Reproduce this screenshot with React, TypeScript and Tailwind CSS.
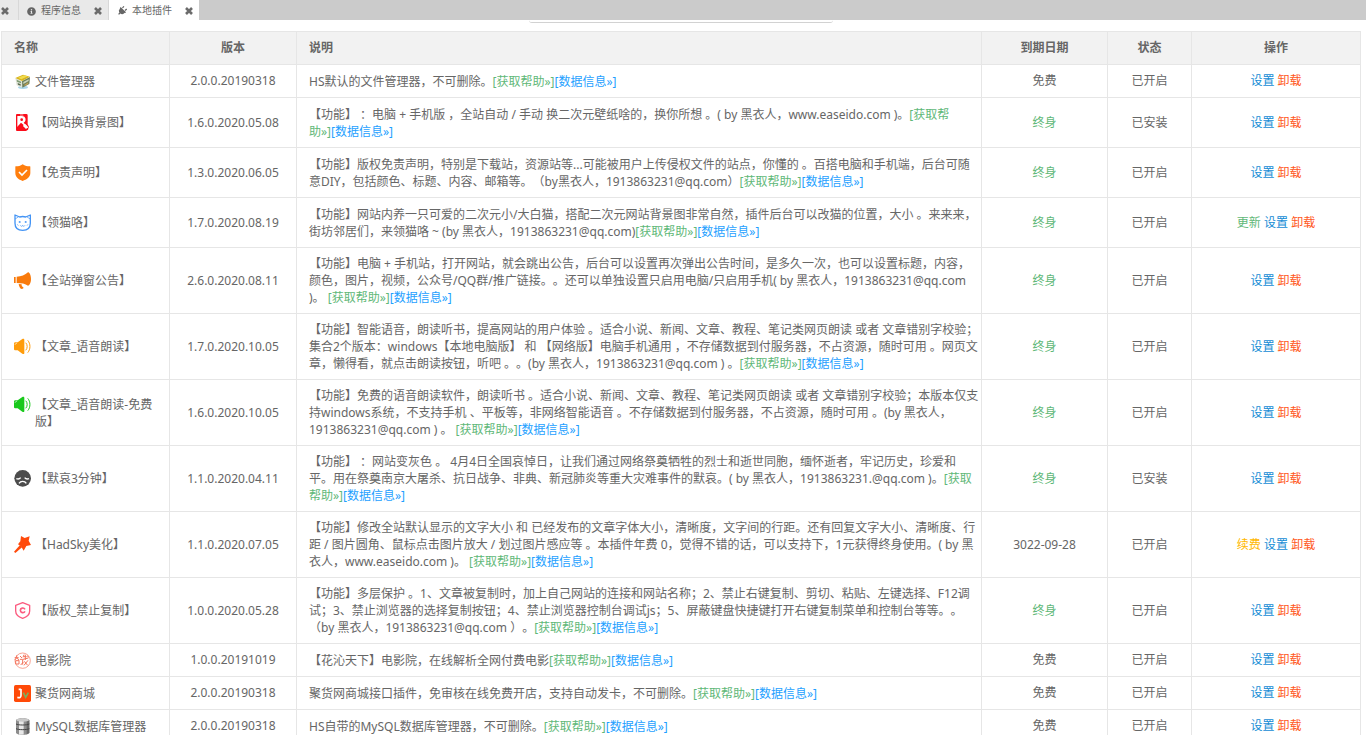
import type { ReactNode } from 'react';
import { FaInfoCircle, FaPlug } from 'react-icons/fa';

interface Plugin {
  icon: ReactNode;
  name: string;
  version: string;
  desc: string;
  help?: string;
  expire: string;
  status: string;
  extra?: 'update' | 'renew';
}

const ICON = 'w-[17px] h-[17px] shrink-0';

const BoxIcon = () => (
  <svg viewBox="0 0 51 51" className={ICON}>
    <ellipse cx="27" cy="43" rx="15" ry="5" fill="#a9d4ea" />
    <path d="M4 15 24 24 25 44 8 37Z" fill="#dfe3d6" />
    <path d="M24 24 48 12 46 33 25 44Z" fill="#6d7f5a" />
    <path d="M4 15 27 5 48 11 24 24Z" fill="#d8b31c" />
    <path d="M12 14 30 7 41 10 22 19Z" fill="#f1dc4e" />
    <path d="M8 20 21 26v5L9 26Z" fill="#7d9a72" />
    <path d="M11 30 20 34v4l-8-3Z" fill="#55684d" />
    <path d="M28 27 44 19v5L28 33Z" fill="#c9d2bd" />
    <path d="M31 35 43 28v4l-11 7Z" fill="#c4a254" />
  </svg>
);

const PhoneImageIcon = () => (
  <svg viewBox="0 0 51 51" className={ICON}>
    <path d="M9 0h28a4 4 0 0 1 4 4v27l4 8-3 8-6 4H9a3 3 0 0 1-3-3V3a3 3 0 0 1 3-3Z" fill="#fb0d1b" />
    <path d="M10 6h13c14 0 15 16 6 20l13 14-6 5-15-15-11 10Z" fill="#fff" />
    <circle cx="23" cy="17" r="4" fill="#fb0d1b" />
    <path d="m10 38 11-12 8 7-9 11H10Z" fill="#fb0d1b" />
    <path d="m34 31 9 12" stroke="#fff" strokeWidth="3" />
    <path d="M18 3h10" stroke="#fff" strokeWidth="2" />
  </svg>
);

const ShieldCheckIcon = () => (
  <svg viewBox="0 0 51 51" className={ICON}>
    <path d="M26 1c7 5 14 6 21 6 2 0 2 1 2 3v17c0 13-11 19-23 24C14 46 4 40 4 27V10c0-2 0-3 2-3 7 0 13-1 20-6Z" fill="#ff7e0d" />
    <path d="m15 24 9 9 15-15" fill="none" stroke="#fff" strokeWidth="5" />
  </svg>
);

const CatIcon = () => (
  <svg viewBox="0 0 51 51" className={ICON} fill="none" stroke="#4394f5" strokeWidth="4">
    <path d="M3 3 17 9c6-2 12-2 18 0L49 3v25c0 14-10 21-23 21S3 42 3 28Z" strokeLinejoin="round" />
    <path d="M3 15 13 9M49 15 39 9" strokeWidth="2" />
    <circle cx="17" cy="24" r="1" />
    <circle cx="35" cy="24" r="1" />
    <path d="M19 34c2 4 6 4 7 0 1 4 5 4 7 0M10 31l3 4M42 31l-3 4" strokeWidth="2" />
  </svg>
);

const HornIcon = () => (
  <svg viewBox="0 0 51 51" className={ICON} fill="#f97a0b">
    <path d="M0 15h5v18H0ZM8 14c14 0 25-5 34-13 4 0 9 8 9 20s-5 20-9 20c-8-6-20-8-34-8Z" />
    <path d="m14 36 9 1c-1 5 2 7 5 9 1 3-1 5-5 5-5-1-8-8-9-15Z" />
  </svg>
);

const SpeakerIcon = ({ color }: { color: string }) => (
  <svg viewBox="0 0 51 51" className={ICON} fill={color}>
    <path d="M0 17c0-3 2-4 5-4h6L25 3c3-2 6-1 6 3v39c0 4-3 4-6 2L11 37H5c-3 0-5-1-5-4Z" />
    <path d="M3 20c1-3 3-4 6-4" fill="none" stroke="#fff" strokeWidth="2" />
    <path d="M36 15c5 5 5 16 0 21M42 8c8 9 8 26 0 35" fill="none" stroke={color} strokeWidth="3" strokeLinecap="round" />
  </svg>
);

const SadFaceIcon = () => (
  <svg viewBox="0 0 51 51" className={ICON}>
    <circle cx="26" cy="25" r="25" fill="#4c4c4c" />
    <path d="M7 26c5 2 10 1 13-3M45 26c-5 2-10 1-13-3" fill="none" stroke="#fff" strokeWidth="4" />
    <path d="M15 40c5-8 17-8 22 0" fill="none" stroke="#fff" strokeWidth="4" />
  </svg>
);

const WandIcon = () => (
  <svg viewBox="0 0 51 51" className={ICON} fill="#ff4a0b">
    <path d="m21 0 11 6 15-5-3 13 7 13-14 3-8 14-8-13-9-6 7-9Z" />
    <path d="m18 27 7 6L4 51l-4-4Z" />
  </svg>
);

const CopyrightShieldIcon = () => (
  <svg viewBox="0 0 51 51" className={ICON} fill="none" stroke="#fb5c80" strokeWidth="4">
    <path d="M26 2 47 10v17c0 11-9 18-21 22C14 45 5 38 5 27V10Z" strokeLinejoin="round" />
    <path d="M33 22c-4-7-14-4-14 3s10 10 14 3" strokeWidth="5" />
  </svg>
);

const CinemaIcon = () => (
  <svg viewBox="0 0 51 51" className={ICON} fill="none" stroke="#f4745c">
    <circle cx="26" cy="26" r="23" strokeWidth="2" />
    <path d="M2 17h12M8 10v7M2 24l6-6 8 6M5 26h10v10H5ZM18 12l6 6M18 22h8v16M30 8l-3 8M29 14h9M34 8v16M27 22l16-4M31 28l10 12M42 25 30 40M39 11l6 5M20 39l8-9" strokeWidth="3" />
  </svg>
);

const MallIcon = () => (
  <svg viewBox="0 0 51 51" className={ICON} fill="none" strokeWidth="5">
    <rect width="51" height="51" rx="5" fill="#ff4a08" />
    <path d="M21 12v19c0 7-4 8-11 6M14 13h7" stroke="#fff" />
    <path d="m28 23 7 14 8-14" stroke="#7bb05f" />
  </svg>
);

const DatabaseIcon = () => (
  <svg viewBox="0 0 51 51" className={ICON}>
    <path d="M6 6C10-1 42-1 46 6v39c-4 8-36 8-40 0Z" fill="#8d8d8d" />
    <path d="M15 4h14v46H15Z" fill="#e8e8e8" />
    <path d="M38 3l8 4v38l-8 4Z" fill="#686868" />
    <ellipse cx="26" cy="6" rx="19" ry="5" fill="#c9c9c9" />
    <path d="M6 18c7 4 33 4 40 0M6 32c7 4 33 4 40 0" stroke="#444" strokeWidth="3" fill="none" />
  </svg>
);

const PLUGINS: Plugin[] = [
  {
    icon: <BoxIcon />,
    name: '文件管理器',
    version: '2.0.0.20190318',
    desc: 'HS默认的文件管理器，不可删除。',
    expire: '免费',
    status: '已开启',
  },
  {
    icon: <PhoneImageIcon />,
    name: '【网站换背景图】',
    version: '1.6.0.2020.05.08',
    desc: '【功能】 ：电脑 + 手机版 ，全站自动 / 手动 换二次元壁纸啥的，换你所想 。( by 黑衣人，www.easeido.com )。',
    help: '[获取帮\n助»]',
    expire: '终身',
    status: '已安装',
  },
  {
    icon: <ShieldCheckIcon />,
    name: '【免责声明】',
    version: '1.3.0.2020.06.05',
    desc: '【功能】版权免责声明，特别是下载站，资源站等...可能被用户上传侵权文件的站点，你懂的 。百搭电脑和手机端，后台可随\n意DIY，包括颜色、标题、内容、邮箱等。（by黑衣人，1913863231@qq.com）',
    expire: '终身',
    status: '已开启',
  },
  {
    icon: <CatIcon />,
    name: '【领猫咯】',
    version: '1.7.0.2020.08.19',
    desc: '【功能】网站内养一只可爱的二次元小/大白猫，搭配二次元网站背景图非常自然，插件后台可以改猫的位置，大小 。来来来，\n街坊邻居们，来领猫咯 ~ (by 黑衣人，1913863231@qq.com)',
    expire: '终身',
    status: '已开启',
    extra: 'update',
  },
  {
    icon: <HornIcon />,
    name: '【全站弹窗公告】',
    version: '2.6.0.2020.08.11',
    desc: '【功能】电脑 + 手机站，打开网站，就会跳出公告，后台可以设置再次弹出公告时间，是多久一次，也可以设置标题，内容，\n颜色，图片，视频，公众号/QQ群/推广链接。。还可以单独设置只启用电脑/只启用手机( by 黑衣人，1913863231@qq.com\n)。 ',
    expire: '终身',
    status: '已开启',
  },
  {
    icon: <SpeakerIcon color="#ff9c0a" />,
    name: '【文章_语音朗读】',
    version: '1.7.0.2020.10.05',
    desc: '【功能】智能语音，朗读听书，提高网站的用户体验 。适合小说、新闻、文章、教程、笔记类网页朗读 或者 文章错别字校验；\n集合2个版本：windows【本地电脑版】 和 【网络版】电脑手机通用 ，不存储数据到付服务器，不占资源，随时可用 。网页文\n章，懒得看，就点击朗读按钮，听吧 。。(by 黑衣人，1913863231@qq.com ) 。',
    expire: '终身',
    status: '已开启',
  },
  {
    icon: <SpeakerIcon color="#19c91c" />,
    name: '【文章_语音朗读-免费版】',
    version: '1.6.0.2020.10.05',
    desc: '【功能】免费的语音朗读软件，朗读听书 。适合小说、新闻、文章、教程、笔记类网页朗读 或者 文章错别字校验；本版本仅支\n持windows系统，不支持手机 、平板等，非网络智能语音 。不存储数据到付服务器，不占资源，随时可用 。(by 黑衣人，\n1913863231@qq.com ) 。 ',
    expire: '终身',
    status: '已开启',
  },
  {
    icon: <SadFaceIcon />,
    name: '【默哀3分钟】',
    version: '1.1.0.2020.04.11',
    desc: '【功能】 ：网站变灰色 。 4月4日全国哀悼日，让我们通过网络祭奠牺牲的烈士和逝世同胞，缅怀逝者，牢记历史，珍爱和\n平。用在祭奠南京大屠杀、抗日战争、非典、新冠肺炎等重大灾难事件的默哀。( by 黑衣人，1913863231.@qq.com )。',
    help: '[获取\n帮助»]',
    expire: '终身',
    status: '已安装',
  },
  {
    icon: <WandIcon />,
    name: '【HadSky美化】',
    version: '1.1.0.2020.07.05',
    desc: '【功能】修改全站默认显示的文字大小 和 已经发布的文章字体大小，清晰度，文字间的行距。还有回复文字大小、清晰度、行\n距 / 图片圆角、鼠标点击图片放大 / 划过图片感应等 。本插件年费 0，觉得不错的话，可以支持下，1元获得终身使用。( by 黑\n衣人，www.easeido.com )。 ',
    expire: '3022-09-28',
    status: '已开启',
    extra: 'renew',
  },
  {
    icon: <CopyrightShieldIcon />,
    name: '【版权_禁止复制】',
    version: '1.0.0.2020.05.28',
    desc: '【功能】多层保护 。1、文章被复制时，加上自己网站的连接和网站名称；2、禁止右键复制、剪切、粘贴、左键选择、F12调\n试；3、禁止浏览器的选择复制按钮；4、禁止浏览器控制台调试js；5、屏蔽键盘快捷键打开右键复制菜单和控制台等等。。\n（by 黑衣人，1913863231@qq.com ）。',
    expire: '终身',
    status: '已开启',
  },
  {
    icon: <CinemaIcon />,
    name: '电影院',
    version: '1.0.0.20191019',
    desc: '【花沁天下】电影院，在线解析全网付费电影',
    expire: '免费',
    status: '已开启',
  },
  {
    icon: <MallIcon />,
    name: '聚货网商城',
    version: '2.0.0.20190318',
    desc: '聚货网商城接口插件，免审核在线免费开店，支持自动发卡，不可删除。',
    expire: '免费',
    status: '已开启',
  },
  {
    icon: <DatabaseIcon />,
    name: 'MySQL数据库管理器',
    version: '2.0.0.20190318',
    desc: 'HS自带的MySQL数据库管理器，不可删除。',
    expire: '免费',
    status: '已开启',
  },
];

const EXTRA = {
  update: { label: '更新', color: 'text-[#5fb878]' },
  renew: { label: '续费', color: 'text-[#ffb800]' },
};

const CELL = 'border border-[#e6e6e6] px-3';
const HEADERS = ['名称', '版本', '说明', '到期日期', '状态', '操作'];

function CloseButton({ label }: { label: string }) {
  return (
    <button type="button" aria-label={label} className="flex">
      <svg viewBox="0 0 8 8" className="w-2 h-2" stroke="#6b6b6b" strokeWidth="2.6">
        <path d="m1 1 6 6M7 1 1 7" />
      </svg>
    </button>
  );
}

function Description({ desc, help = '[获取帮助»]' }: { desc: string; help?: string }) {
  const lines = desc.split('\n');
  const last = lines.pop();
  const [helpStart, helpRest] = help.split('\n');
  const dataLink = <a href="#data" className="text-[#1e9fff]">[数据信息»]</a>;

  return (
    <>
      {lines.map((line) => <div key={line}>{line}</div>)}
      <div>
        <span>{last}</span>
        <a href="#help" className="text-[#5fb878]">{helpStart}</a>
        {!helpRest && dataLink}
      </div>
      {helpRest && (
        <div>
          <a href="#help" className="text-[#5fb878]">{helpRest}</a>
          {dataLink}
        </div>
      )}
    </>
  );
}

export default function App() {
  return (
    <div className={`h-screen overflow-hidden bg-white text-xs text-[#666] font-['Noto_Sans','Noto_Sans_CJK_SC',sans-serif] [text-spacing-trim:space-all]`}>
      {/* Tabs */}
      <nav className="flex h-5 bg-[#cbcbcb] text-[10px]">
        <div className="flex items-center justify-between w-[19px] pl-px pt-0.5 bg-[#e9e9e9] border-r border-[#d8d8d8]">
          <CloseButton label="关闭" />
        </div>
        <div className="flex items-center w-[90px] pl-2 pr-1.5 pt-0.5 bg-[#e9e9e9] border-r border-[#d8d8d8]">
          <FaInfoCircle className="w-[9px] h-[9px] mr-[5px]" />
          <a href="#info">程序信息</a>
          <span className="ml-auto"><CloseButton label="关闭程序信息" /></span>
        </div>
        <div className="flex items-center w-[90px] pl-2 pr-1.5 pt-0.5 bg-white">
          <FaPlug className="w-[10px] h-[10px] mr-[5px] rotate-45" />
          <a href="#plugins">本地插件</a>
          <span className="ml-auto"><CloseButton label="关闭本地插件" /></span>
        </div>
      </nav>

      <div className="flex justify-center h-[11px] pr-1">
        <div className="w-[304px] h-[3px] border-b border-[#d2d2d2] rounded-b-sm" />
      </div>

      {/* Plugin list */}
      <div className="ml-px mr-[5px]">
        <table className="w-full table-fixed border-collapse">
          <colgroup>
            <col className="w-[168px]" />
            <col className="w-[127px]" />
            <col />
            <col className="w-[126px]" />
            <col className="w-[84px]" />
            <col className="w-[169px]" />
          </colgroup>
          <thead>
            <tr className="h-[33px] bg-[#f2f2f2]">
              {HEADERS.map((h, i) => (
                <th key={h} className={`${CELL} font-bold ${i === 0 || i === 2 ? 'text-left' : 'text-center'}`}>{h}</th>
              ))}
            </tr>
          </thead>
          <tbody>
            {PLUGINS.map((p) => {
              const lines = (p.desc + (p.help ?? '')).split('\n').length;
              const height = lines === 1 ? 'h-[33px]' : lines === 2 ? 'h-[50px]' : 'h-[66px]';
              return (
                <tr key={p.name} className={height}>
                  <td className={CELL}>
                    <div className="flex gap-1 leading-[17px]">
                      {p.icon}
                      <span>{p.name}</span>
                    </div>
                  </td>
                  <td className={`${CELL} text-center`}>{p.version}</td>
                  <td className={`${CELL} whitespace-pre leading-[17px]`}>
                    <Description desc={p.desc} help={p.help} />
                  </td>
                  <td className={`${CELL} text-center ${p.expire === '终身' ? 'text-[#5fb878]' : ''}`}>{p.expire}</td>
                  <td className={`${CELL} text-center`}>{p.status}</td>
                  <td className={`${CELL} text-center`}>
                    {p.extra && <><a href="#extra" className={EXTRA[p.extra].color}>{EXTRA[p.extra].label}</a>{' '}</>}
                    <a href="#set" className="text-[#148cd5]">设置</a>{' '}
                    <a href="#remove" className="text-[#ff5722]">卸载</a>
                  </td>
                </tr>
              );
            })}
          </tbody>
        </table>
      </div>
    </div>
  );
}
